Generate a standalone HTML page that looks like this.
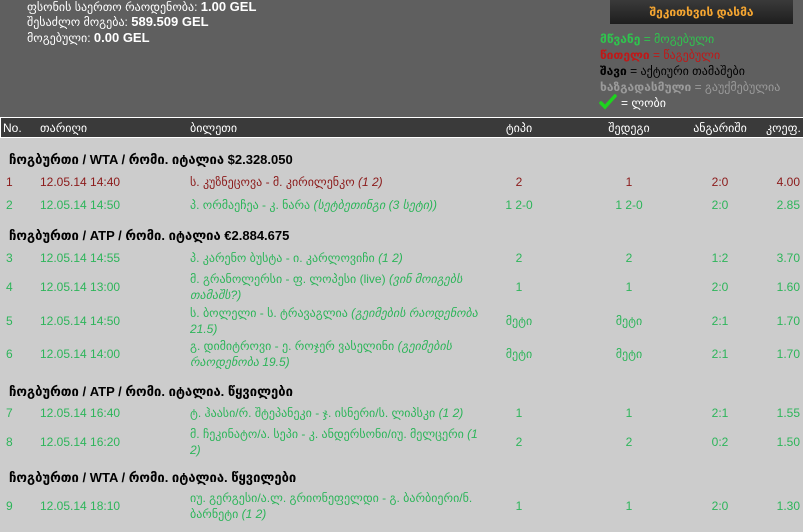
<!DOCTYPE html>
<html><head><meta charset="utf-8"><style>
*{margin:0;padding:0;box-sizing:border-box}
body{width:803px;height:532px;overflow:hidden;background:#cccccc;font-family:"Liberation Sans","DejaVu Sans",sans-serif;font-size:12px;position:relative}
.top{position:absolute;left:0;top:0;width:803px;height:117px;background:#5f5f5f}
.a{position:absolute;white-space:nowrap;line-height:16px}
.w{color:#fff}
.w b{font-size:13px}
.hdr{position:absolute;left:0;top:117px;width:803px;height:21px;background:#3a3a3a;border-top:1px solid #fff;border-left:1px solid #fff;border-bottom:1px solid #fff;color:#fff}
.btn{position:absolute;left:610px;top:0;width:183px;height:24px;background:linear-gradient(#3a3a3a,#1e1e1e);color:#f4a531;font-weight:bold;text-align:center;line-height:24px;font-size:12px}
.g{color:#2db55a}
.r{color:#8b1a1a}
.grp{position:absolute;left:9px;font-weight:bold;color:#000;font-size:13px;white-space:nowrap}
.c{text-align:center;width:60px;margin-left:-30px}
.rt{text-align:right;width:60px}
i{font-style:italic}
.t{white-space:normal;line-height:16px}
</style></head><body>
<div class="top"></div>
<div class="a w" style="left:27px;top:-1px">ფსონის საერთო რაოდენობა: <b>1.00 GEL</b></div>
<div class="a w" style="left:27px;top:14px">შესაძლო მოგება: <b>589.509 GEL</b></div>
<div class="a w" style="left:27px;top:30px">მოგებული: <b>0.00 GEL</b></div>
<div class="btn">შეკითხვის დასმა</div>
<div class="a" style="left:600px;top:31px;color:#2fc44e"><b>მწვანე</b> = მოგებული</div>
<div class="a" style="left:600px;top:47px;color:#c01818"><b>წითელი</b> = წაგებული</div>
<div class="a" style="left:600px;top:63px;color:#000"><b>შავი</b> = აქტიური თამაშები</div>
<div class="a" style="left:600px;top:79px;color:#9a9a9a"><b>ხაზგადასმული</b> = გაუქმებულია</div>
<svg style="position:absolute;left:599px;top:94px" width="18" height="16" viewBox="0 0 18 16"><path d="M2 9 L6 13 L16 2" stroke="#1ed41e" stroke-width="3.5" fill="none" stroke-linecap="round"/></svg>
<div class="a w" style="left:621px;top:95px">= ლობი</div>
<div class="hdr"></div>
<div class="a w" style="left:3px;top:120px">No.</div>
<div class="a w" style="left:40px;top:120px">თარიღი</div>
<div class="a w" style="left:190px;top:120px">ბილეთი</div>
<div class="a w c" style="left:519px;top:120px">ტიპი</div>
<div class="a w c" style="left:629px;top:120px">შედეგი</div>
<div class="a w c" style="left:720px;top:120px">ანგარიში</div>
<div class="a w" style="left:766px;top:120px">კოეფ.</div>

<div class="grp" style="top:152px">ჩოგბურთი / WTA / რომი. იტალია $2.328.050</div>
<div class="a r" style="left:6px;top:174px">1</div><div class="a r" style="left:40px;top:174px">12.05.14 14:40</div><div class="a r" style="left:190px;top:174px">ს. კუზნეცოვა - მ. კირილენკო <i>(1 2)</i></div><div class="a r c" style="left:519px;top:174px">2</div><div class="a r c" style="left:629px;top:174px">1</div><div class="a r c" style="left:720px;top:174px">2:0</div><div class="a r rt" style="left:740px;top:174px">4.00</div>
<div class="a g" style="left:6px;top:197px">2</div><div class="a g" style="left:40px;top:197px">12.05.14 14:50</div><div class="a g" style="left:190px;top:197px">პ. ორმაეჩეა - კ. ნარა <i>(სეტბეთინგი (3 სეტი))</i></div><div class="a g c" style="left:519px;top:197px">1 2-0</div><div class="a g c" style="left:629px;top:197px">1 2-0</div><div class="a g c" style="left:720px;top:197px">2:0</div><div class="a g rt" style="left:740px;top:197px">2.85</div>

<div class="grp" style="top:228px">ჩოგბურთი / ATP / რომი. იტალია €2.884.675</div>
<div class="a g" style="left:6px;top:250px">3</div><div class="a g" style="left:40px;top:250px">12.05.14 14:55</div><div class="a g" style="left:190px;top:250px">პ. კარენო ბუსტა - ი. კარლოვიჩი <i>(1 2)</i></div><div class="a g c" style="left:519px;top:250px">2</div><div class="a g c" style="left:629px;top:250px">2</div><div class="a g c" style="left:720px;top:250px">1:2</div><div class="a g rt" style="left:740px;top:250px">3.70</div>
<div class="a g" style="left:6px;top:279px">4</div><div class="a g" style="left:40px;top:279px">12.05.14 13:00</div><div class="a g t" style="left:190px;top:271px">მ. გრანოლერსი - ფ. ლოპესი (live) <i>(ვინ მოიგებს<br>თამაშს?)</i></div><div class="a g c" style="left:519px;top:279px">1</div><div class="a g c" style="left:629px;top:279px">1</div><div class="a g c" style="left:720px;top:279px">2:0</div><div class="a g rt" style="left:740px;top:279px">1.60</div>
<div class="a g" style="left:6px;top:313px">5</div><div class="a g" style="left:40px;top:313px">12.05.14 14:50</div><div class="a g t" style="left:190px;top:305px">ს. ბოლელი - ს. ტრავაგლია <i>(გეიმების რაოდენობა<br>21.5)</i></div><div class="a g c" style="left:519px;top:313px">მეტი</div><div class="a g c" style="left:629px;top:313px">მეტი</div><div class="a g c" style="left:720px;top:313px">2:1</div><div class="a g rt" style="left:740px;top:313px">1.70</div>
<div class="a g" style="left:6px;top:346px">6</div><div class="a g" style="left:40px;top:346px">12.05.14 14:00</div><div class="a g t" style="left:190px;top:338px">გ. დიმიტროვი - ე. როჯერ ვასელინი <i>(გეიმების<br>რაოდენობა 19.5)</i></div><div class="a g c" style="left:519px;top:346px">მეტი</div><div class="a g c" style="left:629px;top:346px">მეტი</div><div class="a g c" style="left:720px;top:346px">2:1</div><div class="a g rt" style="left:740px;top:346px">1.70</div>

<div class="grp" style="top:384px">ჩოგბურთი / ATP / რომი. იტალია. წყვილები</div>
<div class="a g" style="left:6px;top:405px">7</div><div class="a g" style="left:40px;top:405px">12.05.14 16:40</div><div class="a g" style="left:190px;top:405px">ტ. ჰაასი/რ. შტეპანეკი - ჯ. ისნერი/ს. ლიპსკი <i>(1 2)</i></div><div class="a g c" style="left:519px;top:405px">1</div><div class="a g c" style="left:629px;top:405px">1</div><div class="a g c" style="left:720px;top:405px">2:1</div><div class="a g rt" style="left:740px;top:405px">1.55</div>
<div class="a g" style="left:6px;top:434px">8</div><div class="a g" style="left:40px;top:434px">12.05.14 16:20</div><div class="a g t" style="left:190px;top:426px">მ. ჩეკინატო/ა. სეპი - კ. ანდერსონი/იუ. მელცერი <i>(1<br>2)</i></div><div class="a g c" style="left:519px;top:434px">2</div><div class="a g c" style="left:629px;top:434px">2</div><div class="a g c" style="left:720px;top:434px">0:2</div><div class="a g rt" style="left:740px;top:434px">1.50</div>

<div class="grp" style="top:470px">ჩოგბურთი / WTA / რომი. იტალია. წყვილები</div>
<div class="a g" style="left:6px;top:498px">9</div><div class="a g" style="left:40px;top:498px">12.05.14 18:10</div><div class="a g t" style="left:190px;top:490px">იუ. გერგესი/ა.ლ. გრიონეფელდი - გ. ბარბიერი/ნ.<br>ბარნეტი <i>(1 2)</i></div><div class="a g c" style="left:519px;top:498px">1</div><div class="a g c" style="left:629px;top:498px">1</div><div class="a g c" style="left:720px;top:498px">2:0</div><div class="a g rt" style="left:740px;top:498px">1.30</div>
</body></html>
